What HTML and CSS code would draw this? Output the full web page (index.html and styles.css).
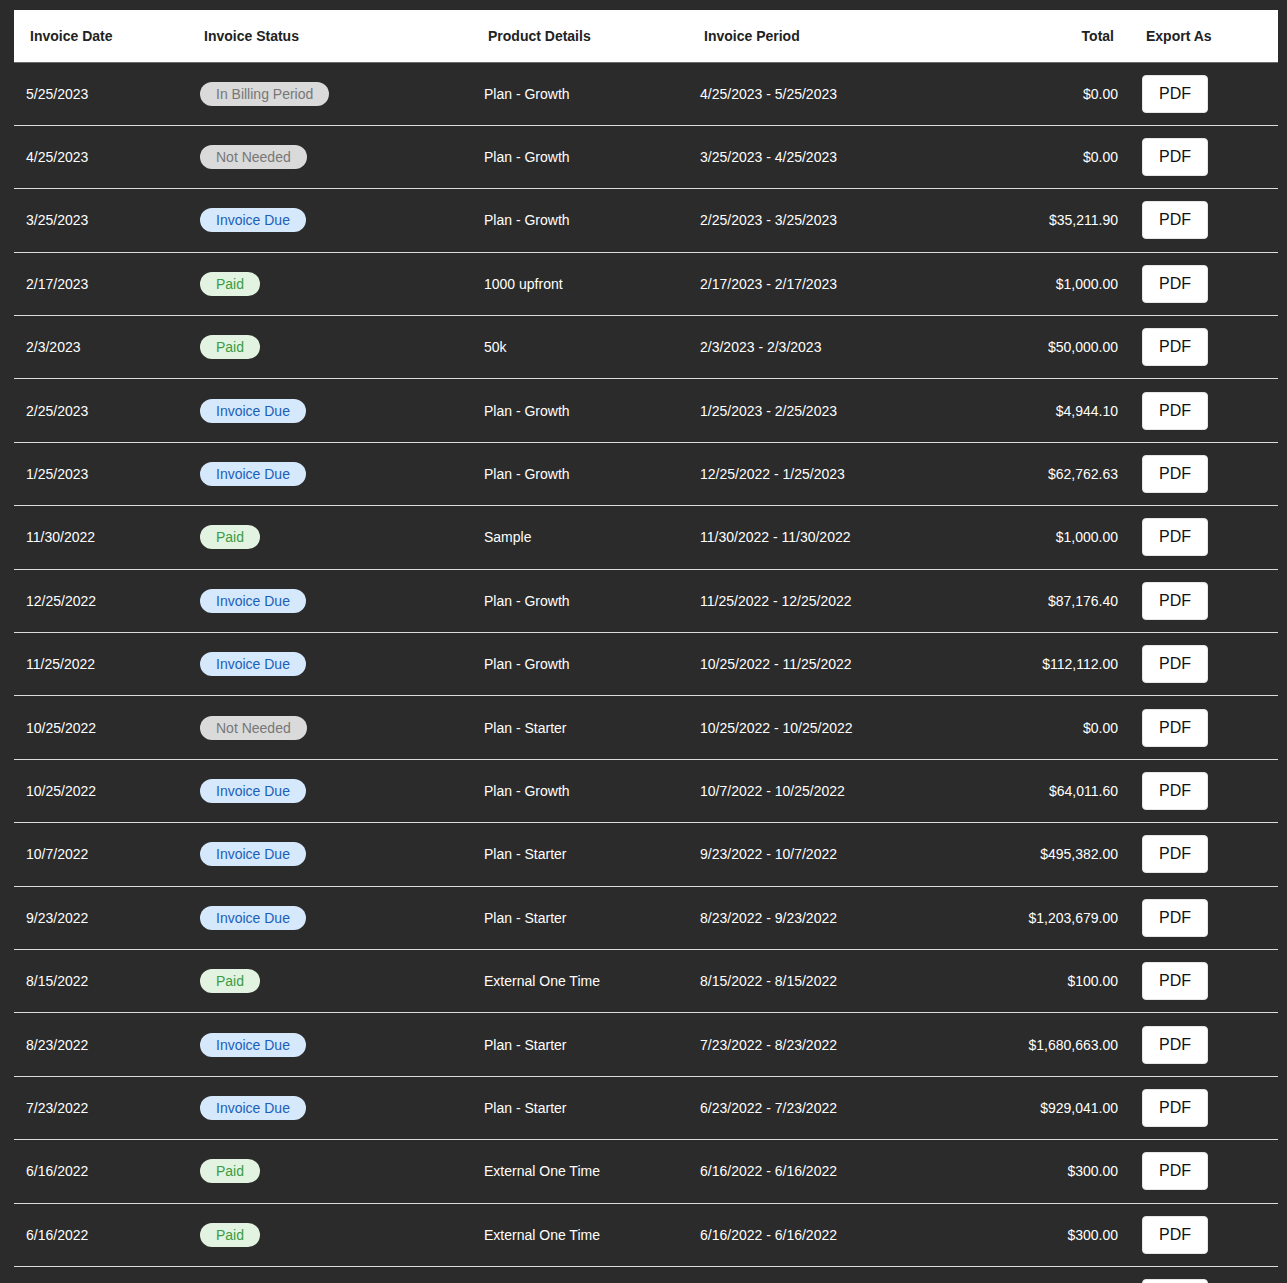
FILE: index.html
```html
<!DOCTYPE html>
<html lang="en">
<head>
<meta charset="utf-8">
<title>Invoices</title>
<link rel="stylesheet" href="styles.css">
</head>
<body>
<table class="invoices">
  <colgroup>
    <col class="c-date"><col class="c-status"><col class="c-product"><col class="c-period"><col class="c-total"><col class="c-export">
  </colgroup>
  <thead>
    <tr>
      <th>Invoice Date</th>
      <th>Invoice Status</th>
      <th>Product Details</th>
      <th>Invoice Period</th>
      <th class="num">Total</th>
      <th>Export As</th>
    </tr>
  </thead>
  <tbody>
    <tr><td>5/25/2023</td><td><span class="badge gray">In Billing Period</span></td><td>Plan - Growth</td><td>4/25/2023 - 5/25/2023</td><td class="num">$0.00</td><td><button class="pdf">PDF</button></td></tr>
    <tr><td>4/25/2023</td><td><span class="badge gray">Not Needed</span></td><td>Plan - Growth</td><td>3/25/2023 - 4/25/2023</td><td class="num">$0.00</td><td><button class="pdf">PDF</button></td></tr>
    <tr><td>3/25/2023</td><td><span class="badge blue">Invoice Due</span></td><td>Plan - Growth</td><td>2/25/2023 - 3/25/2023</td><td class="num">$35,211.90</td><td><button class="pdf">PDF</button></td></tr>
    <tr><td>2/17/2023</td><td><span class="badge green">Paid</span></td><td>1000 upfront</td><td>2/17/2023 - 2/17/2023</td><td class="num">$1,000.00</td><td><button class="pdf">PDF</button></td></tr>
    <tr><td>2/3/2023</td><td><span class="badge green">Paid</span></td><td>50k</td><td>2/3/2023 - 2/3/2023</td><td class="num">$50,000.00</td><td><button class="pdf">PDF</button></td></tr>
    <tr><td>2/25/2023</td><td><span class="badge blue">Invoice Due</span></td><td>Plan - Growth</td><td>1/25/2023 - 2/25/2023</td><td class="num">$4,944.10</td><td><button class="pdf">PDF</button></td></tr>
    <tr><td>1/25/2023</td><td><span class="badge blue">Invoice Due</span></td><td>Plan - Growth</td><td>12/25/2022 - 1/25/2023</td><td class="num">$62,762.63</td><td><button class="pdf">PDF</button></td></tr>
    <tr><td>11/30/2022</td><td><span class="badge green">Paid</span></td><td>Sample</td><td>11/30/2022 - 11/30/2022</td><td class="num">$1,000.00</td><td><button class="pdf">PDF</button></td></tr>
    <tr><td>12/25/2022</td><td><span class="badge blue">Invoice Due</span></td><td>Plan - Growth</td><td>11/25/2022 - 12/25/2022</td><td class="num">$87,176.40</td><td><button class="pdf">PDF</button></td></tr>
    <tr><td>11/25/2022</td><td><span class="badge blue">Invoice Due</span></td><td>Plan - Growth</td><td>10/25/2022 - 11/25/2022</td><td class="num">$112,112.00</td><td><button class="pdf">PDF</button></td></tr>
    <tr><td>10/25/2022</td><td><span class="badge gray">Not Needed</span></td><td>Plan - Starter</td><td>10/25/2022 - 10/25/2022</td><td class="num">$0.00</td><td><button class="pdf">PDF</button></td></tr>
    <tr><td>10/25/2022</td><td><span class="badge blue">Invoice Due</span></td><td>Plan - Growth</td><td>10/7/2022 - 10/25/2022</td><td class="num">$64,011.60</td><td><button class="pdf">PDF</button></td></tr>
    <tr><td>10/7/2022</td><td><span class="badge blue">Invoice Due</span></td><td>Plan - Starter</td><td>9/23/2022 - 10/7/2022</td><td class="num">$495,382.00</td><td><button class="pdf">PDF</button></td></tr>
    <tr><td>9/23/2022</td><td><span class="badge blue">Invoice Due</span></td><td>Plan - Starter</td><td>8/23/2022 - 9/23/2022</td><td class="num">$1,203,679.00</td><td><button class="pdf">PDF</button></td></tr>
    <tr><td>8/15/2022</td><td><span class="badge green">Paid</span></td><td>External One Time</td><td>8/15/2022 - 8/15/2022</td><td class="num">$100.00</td><td><button class="pdf">PDF</button></td></tr>
    <tr><td>8/23/2022</td><td><span class="badge blue">Invoice Due</span></td><td>Plan - Starter</td><td>7/23/2022 - 8/23/2022</td><td class="num">$1,680,663.00</td><td><button class="pdf">PDF</button></td></tr>
    <tr><td>7/23/2022</td><td><span class="badge blue">Invoice Due</span></td><td>Plan - Starter</td><td>6/23/2022 - 7/23/2022</td><td class="num">$929,041.00</td><td><button class="pdf">PDF</button></td></tr>
    <tr><td>6/16/2022</td><td><span class="badge green">Paid</span></td><td>External One Time</td><td>6/16/2022 - 6/16/2022</td><td class="num">$300.00</td><td><button class="pdf">PDF</button></td></tr>
    <tr><td>6/16/2022</td><td><span class="badge green">Paid</span></td><td>External One Time</td><td>6/16/2022 - 6/16/2022</td><td class="num">$300.00</td><td><button class="pdf">PDF</button></td></tr>
    <tr><td>6/23/2022</td><td><span class="badge blue">Invoice Due</span></td><td>Plan - Starter</td><td>5/23/2022 - 6/23/2022</td><td class="num">$812,400.00</td><td><button class="pdf">PDF</button></td></tr>
  </tbody>
</table>
</body>
</html>
```

FILE: styles.css
```css
html, body {
  margin: 0;
  background: #2b2b2b;
}
body {
  padding: 10px 9px 0 14px;
  font-family: "Liberation Sans", Arial, Helvetica, sans-serif;
  overflow: hidden;
}
.invoices {
  width: 1264px;
  table-layout: fixed;
  border-collapse: collapse;
  border-spacing: 0;
}
.c-date { width: 174px; }
.c-status { width: 284px; }
.c-product { width: 216px; }
.c-period { width: 270px; }
.c-total { width: 172px; }
.c-export { width: 148px; }

.invoices thead tr {
  background: #ffffff;
  border-bottom: 1px solid #6a6a6a;
}
.invoices th {
  height: 52px;
  box-sizing: border-box;
  padding: 0 16px;
  text-align: left;
  font-size: 14px;
  font-weight: 700;
  color: #222222;
  vertical-align: middle;
}
.invoices tbody tr {
  border-bottom: 1px solid #dcdcdc;
}
.invoices td {
  height: 63.4px;
  box-sizing: border-box;
  padding: 0 12px;
  font-size: 14px;
  color: #ffffff;
  vertical-align: middle;
  white-space: nowrap;
}
.invoices .num {
  text-align: right;
}
.badge {
  display: inline-block;
  height: 24px;
  line-height: 24px;
  padding: 0 16px;
  border-radius: 12px;
  font-size: 14px;
}
.badge.gray {
  background: #dadada;
  color: #777777;
}
.badge.blue {
  background: #d6e8fb;
  color: #1b5fb8;
}
.badge.green {
  background: #e2f3e2;
  color: #3d9b3f;
}
.pdf {
  display: block;
  box-sizing: border-box;
  height: 38px;
  font-family: "Liberation Sans", Arial, Helvetica, sans-serif;
  font-size: 16px;
  line-height: 18px;
  padding: 9px 16px;
  background: #ffffff;
  color: #111111;
  border: 1px solid #e6e6e6;
  border-radius: 4px;
  cursor: pointer;
}
```
